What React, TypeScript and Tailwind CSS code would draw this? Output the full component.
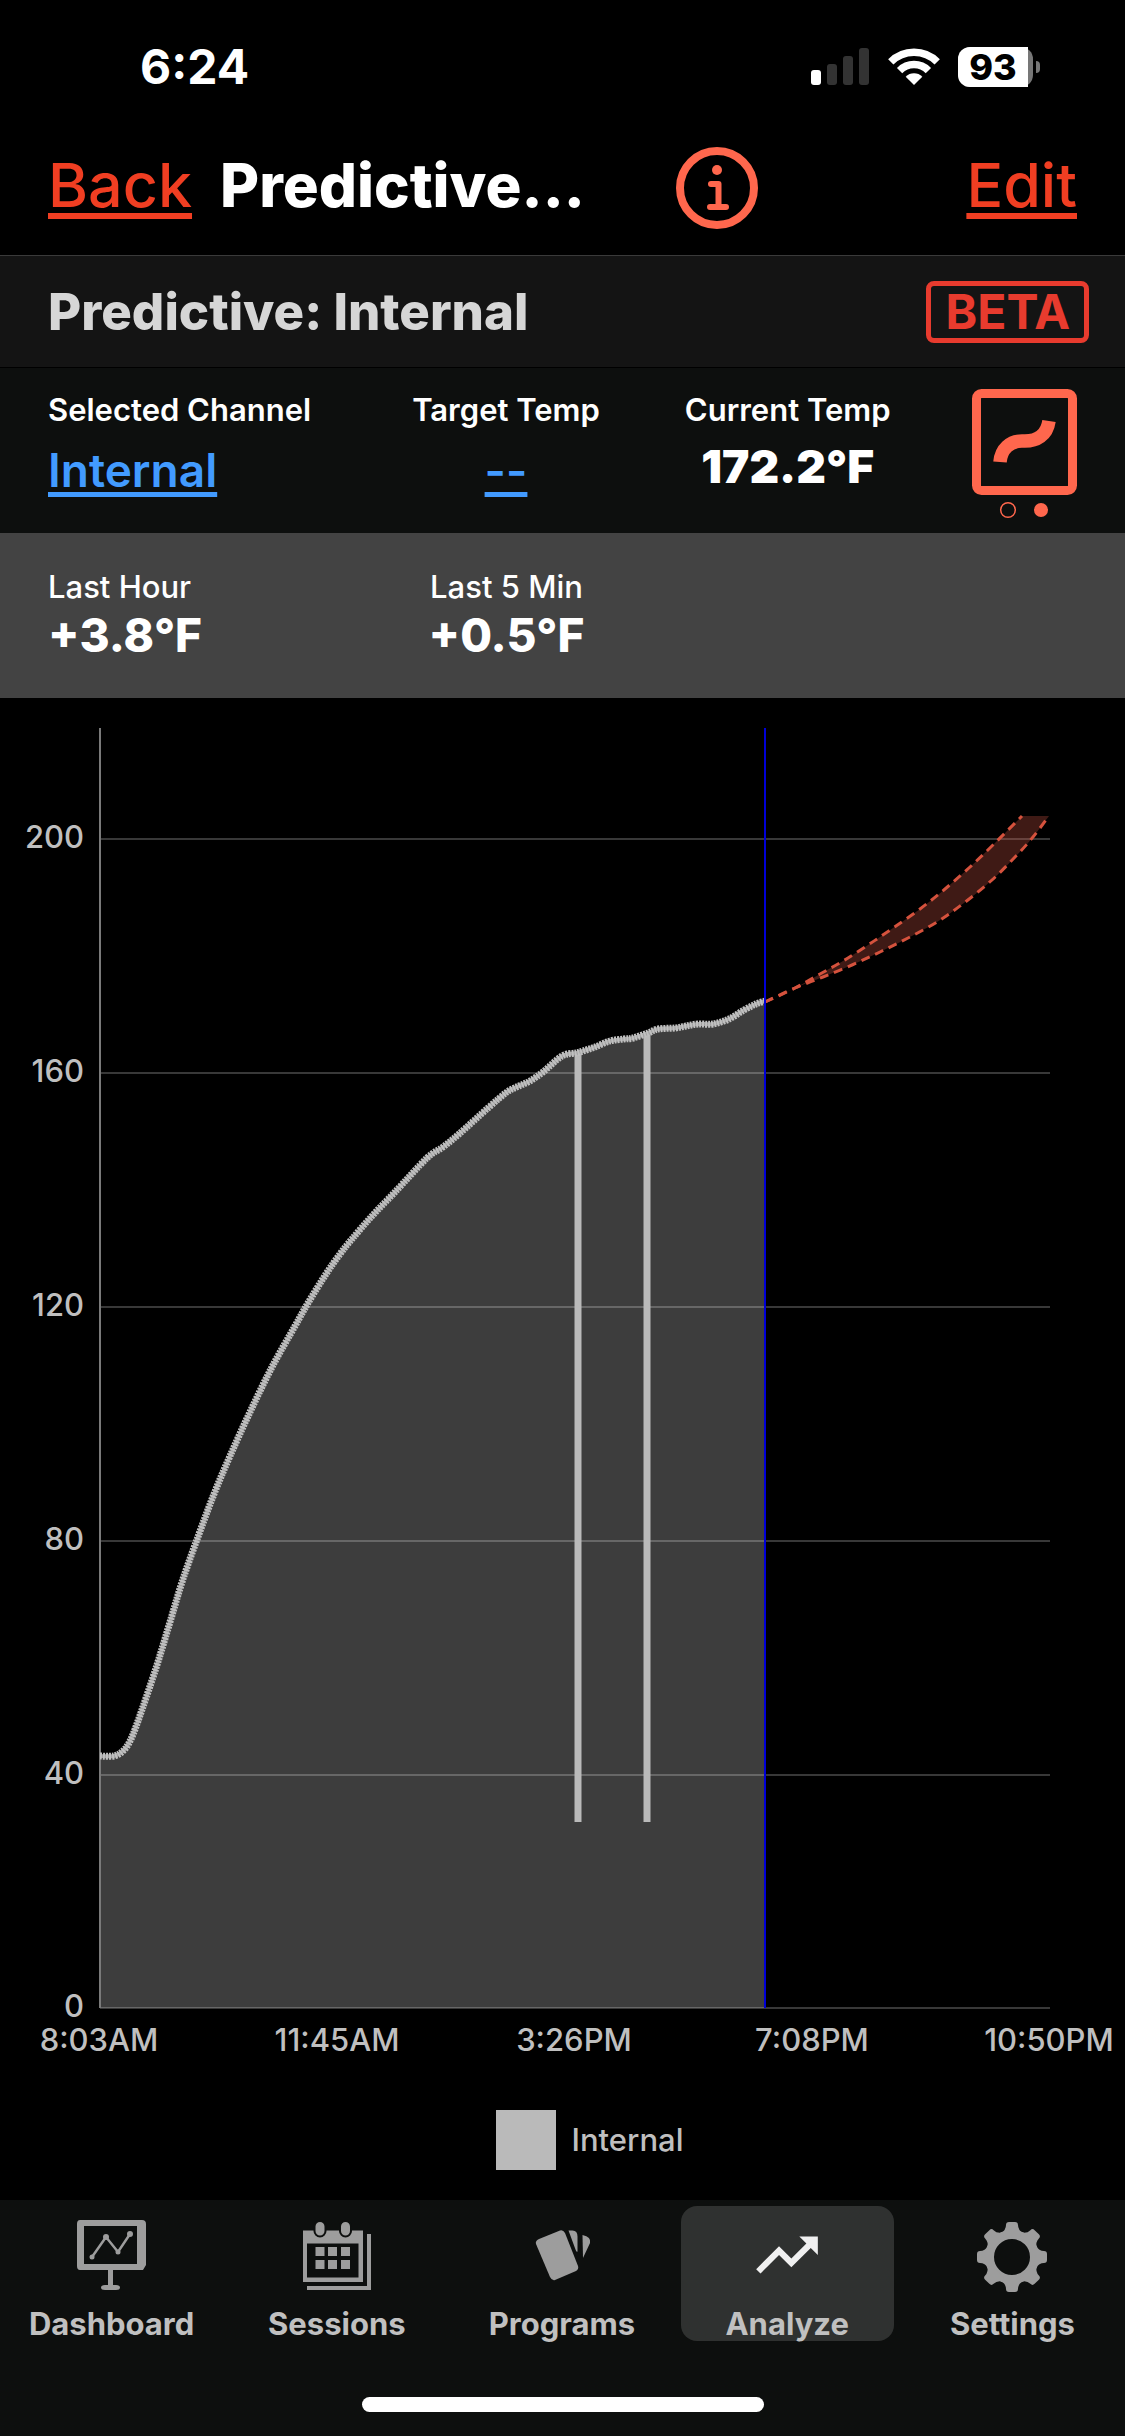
import type { ReactNode } from "react"
import { MdTrendingUp } from "react-icons/md"
import clsx from "clsx"

const BASE_Y = 1310
const GRID = [
  { label: "200", y: 141 },
  { label: "160", y: 375 },
  { label: "120", y: 609 },
  { label: "80", y: 843 },
  { label: "40", y: 1077 },
  { label: "0", y: BASE_Y },
]

const TIMES = [
  { label: "8:03AM", x: 99 },
  { label: "11:45AM", x: 337 },
  { label: "3:26PM", x: 574 },
  { label: "7:08PM", x: 812 },
  { label: "10:50PM", x: 1049 },
]

const READINGS =
  "100,1058 114,1058 123,1053 130,1043 138,1023 156,970 170,924 183,881 199,836 214,796 230,758 250,714 272,669 295,628 308,605 326,576 340,556 352,541 372,518 395,494 427,460 443,449 459,436 488,410 507,394 519,388 530,383 543,374 562,358 576,355 583,353 595,349 610,343 624,341 633,340 648,335 658,331 675,330 686,328 698,326 713,326 729,321 744,312 756,306 765,303"

const UPPER = "765,304 795,290 820,276 843,263 868,247 893,230 920,211 945,191 970,169 995,145 1022,118"
const LOWER = "765,304 795,290 823,279 852,267 880,254 908,240 937,224 964,205 992,182 1017,157 1033,139 1049,118"

const SPIKES = [
  { x: 578, top: 354 },
  { x: 647, top: 335 },
]

// Catmull-Rom spline through the points, as cubic segments
function smooth(points: string) {
  const p = points.split(" ").map((s) => s.split(",").map(Number))
  let d = `${p[0][0]},${p[0][1]}`
  for (let i = 0; i < p.length - 1; i++) {
    const a = p[i - 1] ?? p[i]
    const b = p[i]
    const c = p[i + 1]
    const e = p[i + 2] ?? c
    d += ` C${b[0] + (c[0] - a[0]) / 6},${b[1] + (c[1] - a[1]) / 6} ${c[0] - (e[0] - b[0]) / 6},${c[1] - (e[1] - b[1]) / 6} ${c[0]},${c[1]}`
  }
  return d
}

const curve = smooth(READINGS)
const upper = smooth(UPPER)
const lower = smooth(LOWER)
const band = `M${upper} L${smooth(LOWER.split(" ").reverse().join(" "))}z`

function Chart() {
  return (
    <svg viewBox="0 0 1125 1372" className="block w-full" role="img" aria-label="Internal temperature over time">
      <path d={`M${curve} V${BASE_Y} H100z`} fill="#3d3d3d" />
      <g stroke="#ffffff" strokeOpacity="0.22" strokeWidth="2">
        {GRID.map((g) => (
          <line key={g.label} x1="100" x2="1050" y1={g.y} y2={g.y} />
        ))}
      </g>
      <line x1="100" x2="100" y1="30" y2={BASE_Y} stroke="#7a7a7a" strokeWidth="2" />
      {SPIKES.map((s) => (
        <line key={s.x} x1={s.x} x2={s.x} y1={s.top} y2="1124" stroke="#bababa" strokeWidth="7" />
      ))}
      <path d={`M${curve}`} fill="none" stroke="#a2a2a2" strokeWidth="4" />
      <path d={`M${curve}`} fill="none" stroke="#c0c0c0" strokeWidth="7" strokeDasharray="2 1" />
      <path d={band} fill="#e8604c" fillOpacity="0.27" />
      <g fill="none" stroke="#d5523d" strokeWidth="3" strokeDasharray="9 6">
        <path d={`M${upper}`} />
        <path d={`M${lower}`} />
      </g>
      <line x1="765" x2="765" y1="30" y2={BASE_Y} stroke="#0000d8" strokeWidth="2" />
      <g fill="#bfbfbf" fontSize="31" fontWeight="500">
        {GRID.map((g) => (
          <text key={g.label} x="84" y={g.y + 9} textAnchor="end">
            {g.label}
          </text>
        ))}
        {TIMES.map((t) => (
          <text key={t.label} x={t.x} y="1353" textAnchor="middle">
            {t.label}
          </text>
        ))}
      </g>
    </svg>
  )
}

function StatusBar() {
  return (
    <div className="flex h-[118px] items-center justify-between pt-4 pr-[85px] pl-[140px]">
      <time className="text-[48px] leading-[60px] font-bold">6:24</time>
      <div className="flex items-center">
        <svg viewBox="0 0 58 40" className="h-10 w-[58px]" aria-hidden="true">
          <rect x="0" y="23" width="10" height="15" rx="3" fill="#fff" />
          <rect x="16" y="17" width="10" height="21" rx="3" fill="#333" />
          <rect x="32" y="9" width="10" height="29" rx="3" fill="#333" />
          <rect x="48" y="1" width="10" height="37" rx="3" fill="#333" />
        </svg>
        <svg viewBox="0 0 52 40" className="ml-[19px] h-10 w-[52px]" fill="none" stroke="#fff" aria-hidden="true">
          <path d="M2.800 14.800A32.800 32.800 0 0 1 49.200 14.800" strokeWidth="7.500" />
          <path d="M11.600 23.600A20.300 20.300 0 0 1 40.400 23.600" strokeWidth="7.500" />
          <path d="M26 38L17.700 29.700A11.700 11.700 0 0 1 34.300 29.700z" fill="#fff" stroke="none" />
        </svg>
        <div className="ml-[18px] flex items-center gap-[3px]">
          <div className="w-[75px] rounded-xl bg-[#777] pr-[5px]">
            <div className="h-10 rounded-l-xl bg-white text-center text-[36px] leading-10 font-extrabold text-black">
              93
            </div>
          </div>
          <div className="h-3 w-1 rounded-r-full bg-[#777]" />
        </div>
      </div>
    </div>
  )
}

function InfoIcon() {
  return (
    <svg viewBox="0 0 82 82" className="size-[82px]" fill="none" stroke="#ff674d" aria-hidden="true">
      <circle cx="41" cy="41" r="37" strokeWidth="8" />
      <circle cx="41" cy="23" r="5" fill="#ff674d" stroke="none" />
      <path d="M35 37h7.500v23M34 60h16" strokeWidth="6" strokeLinecap="round" strokeLinejoin="round" />
    </svg>
  )
}

function ProbeIcon() {
  return (
    <svg viewBox="0 0 106 132" className="h-[132px] w-[106px]" fill="none" stroke="#ff674d" aria-hidden="true">
      <rect x="5.500" y="5.500" width="96" height="97" rx="5" strokeWidth="9" />
      <path d="M29 74C30 61 39 53 51 53C66 54 76 47 78 33" strokeWidth="13.500" />
      <circle cx="37" cy="122" r="7.300" strokeWidth="1.500" />
      <circle cx="70" cy="122" r="7" fill="#ff674d" stroke="none" />
    </svg>
  )
}

function DashboardIcon() {
  return (
    <svg viewBox="0 0 80 76" className="h-[76px] w-20" fill="#9d9d9d" aria-hidden="true">
      <path
        fillRule="evenodd"
        d="M8 2h62q4 0 4 4v41l-3 5H8q-3 0-3-4V6q0-4 3-4zM12 8v38h53V8z"
      />
      <path d="M36 50h5v17h3q4 0 4 2.500t-4 2.500H33q-4 0-4-2.500t4-2.500h3z" />
      <path d="M20 39L34 19L46 34L58 16" fill="none" stroke="#9d9d9d" strokeWidth="2.500" />
      <circle cx="20" cy="39" r="2.500" />
      <circle cx="34" cy="19" r="3" />
      <circle cx="46" cy="34" r="2.500" />
      <circle cx="58" cy="16" r="3" />
    </svg>
  )
}

function SessionsIcon() {
  return (
    <svg viewBox="0 0 80 76" className="h-[76px] w-20" fill="#9d9d9d" aria-hidden="true">
      <path fillRule="evenodd" d="M6 12.500H66V64H6zM10 25.500V59.500H61.500V25.500z" />
      <path d="M70 16h4v56H10v-4h60z" />
      <g stroke="#0d0f0e" strokeWidth="2">
        <rect x="17.500" y="3" width="11" height="15.500" rx="5.500" />
        <rect x="43" y="3" width="11" height="15.500" rx="5.500" />
      </g>
      {[29, 42].map((y) => [18.5, 31, 44].map((x) => <rect key={`${x}-${y}`} x={x} y={y} width="9" height="9" />))}
    </svg>
  )
}

function ProgramsIcon() {
  return (
    <svg viewBox="0 0 80 76" className="h-[76px] w-20" fill="#9d9d9d" aria-hidden="true">
      <path d="M17 21L38 12.500Q41 11.500 43 15L56 48Q57 51 54 53L33 62Q30 63 28 59L14 26Q13 23 17 21z" />
      <path d="M46.500 12.500h4q5 0 5 6v15q-1 1-2-2z" />
      <path d="M60.500 17q9 2 7.500 8l-7 15z" />
    </svg>
  )
}

function SettingsIcon() {
  return (
    <svg viewBox="0 0 80 76" className="h-[76px] w-20" fill="#9d9d9d" aria-hidden="true">
      <circle cx="40" cy="39" r="22.500" fill="none" stroke="#9d9d9d" strokeWidth="9" />
      {[0, 45, 90, 135, 180, 225, 270, 315].map((a) => (
        <path
          key={a}
          transform={`rotate(${a} 40 39)`}
          d="M29 15Q34 12 34 7Q34 4 37 4H43Q46 4 46 7Q46 12 51 15L48 19H32z"
        />
      ))}
    </svg>
  )
}

const TABS: { label: string; icon: ReactNode; active?: boolean }[] = [
  { label: "Dashboard", icon: <DashboardIcon /> },
  { label: "Sessions", icon: <SessionsIcon /> },
  { label: "Programs", icon: <ProgramsIcon /> },
  { label: "Analyze", icon: <MdTrendingUp className="size-[74px] text-[#f0f0f0]" />, active: true },
  { label: "Settings", icon: <SettingsIcon /> },
]

function TabBar() {
  return (
    <footer className="bg-[#0d0f0e] pt-1.5 pb-6">
      <nav className="-ml-px grid grid-cols-5">
        {TABS.map((t) => (
          <button
            key={t.label}
            type="button"
            aria-current={t.active ? "page" : undefined}
            className={clsx(
              "mx-1.5 flex h-[135px] flex-col items-center justify-between rounded-2xl pt-3",
              t.active && "bg-[#2f3130]"
            )}
          >
            {t.icon}
            <span className="text-[31px] leading-[34px] font-bold text-[#c0c0c0]">{t.label}</span>
          </button>
        ))}
      </nav>
      <div className="mx-auto mt-14 h-[15px] w-[402px] rounded-full bg-white" />
    </footer>
  )
}

export default function App() {
  return (
    <div className="min-h-screen bg-black font-['Inter','Liberation_Sans',sans-serif] text-white">
      <StatusBar />

      <header className="flex h-[137px] items-center px-12">
        <a
          href="#back"
          className="pb-1 text-[61px] leading-[72px] font-medium text-[#f03e22] underline decoration-[6px] underline-offset-[6px] [text-decoration-skip-ink:none]"
        >
          Back
        </a>
        <h1 className="ml-7 w-[456px] truncate pb-1 text-[60px] leading-[72px] font-extrabold">Predictive...</h1>
        <button type="button" aria-label="Info" className="pt-0.5">
          <InfoIcon />
        </button>
        <a
          href="#edit"
          className="ml-auto pb-1 text-[61px] leading-[72px] font-medium text-[#f03e22] underline decoration-[6px] underline-offset-[6px] [text-decoration-skip-ink:none]"
        >
          Edit
        </a>
      </header>

      <div className="flex h-[113px] items-center justify-between border-t border-b border-t-[#3a3a3a] border-b-black bg-[#141414] pr-9 pl-12">
        <h2 className="text-[51px] leading-[60px] font-extrabold text-[#d6d6d6]">Predictive: Internal</h2>
        <span className="rounded-lg border-[5px] border-[#e83b2e] px-3.5 text-[48px] leading-[52px] font-bold text-[#e83b2e]">
          BETA
        </span>
      </div>

      <section className="grid h-[165px] grid-cols-[360fr_197fr_367fr_105fr] bg-[#0d0f0e] px-12">
        <div className="flex flex-col items-start gap-4 pt-6">
          <span className="text-[31px] leading-9 font-semibold">Selected Channel</span>
          <a
            href="#channel"
            className="text-[46px] leading-[52px] font-semibold text-[#429bff] underline decoration-[5px] underline-offset-[5px] [text-decoration-skip-ink:none]"
          >
            Internal
          </a>
        </div>
        <div className="flex flex-col items-center gap-4 pt-6">
          <span className="text-[31px] leading-9 font-semibold whitespace-nowrap">Target Temp</span>
          <a
            href="#target"
            className="text-[46px] leading-[52px] font-semibold text-[#429bff] underline decoration-[5px] underline-offset-[5px] [text-decoration-skip-ink:none]"
          >
            --
          </a>
        </div>
        <div className="flex flex-col items-center gap-3 pt-6">
          <span className="text-[31px] leading-9 font-semibold">Current Temp</span>
          <span className="text-[46px] leading-[52px] font-black">172.2°F</span>
        </div>
        <div className="flex items-start justify-end pt-5">
          <button type="button" aria-label="Probe">
            <ProbeIcon />
          </button>
        </div>
      </section>

      <section className="grid h-[165px] grid-cols-[360fr_197fr_367fr_105fr] bg-[#434343] px-12 pt-9">
        <div className="flex flex-col gap-1">
          <span className="text-[31px] leading-9 font-medium">Last Hour</span>
          <span className="text-[46px] leading-[52px] font-extrabold">+3.8°F</span>
        </div>
        <div className="flex flex-col items-center gap-1">
          <span className="text-[31px] leading-9 font-medium">Last 5 Min</span>
          <span className="text-[46px] leading-[52px] font-extrabold">+0.5°F</span>
        </div>
      </section>

      <main>
        <Chart />
        <div className="flex h-[130px] items-start justify-center gap-4 pt-10 pl-[54px]">
          <span className="size-[60px] bg-[#bababa]" />
          <span className="text-[31px] leading-[60px] font-medium text-[#bfbfbf]">Internal</span>
        </div>
      </main>

      <TabBar />
    </div>
  )
}
